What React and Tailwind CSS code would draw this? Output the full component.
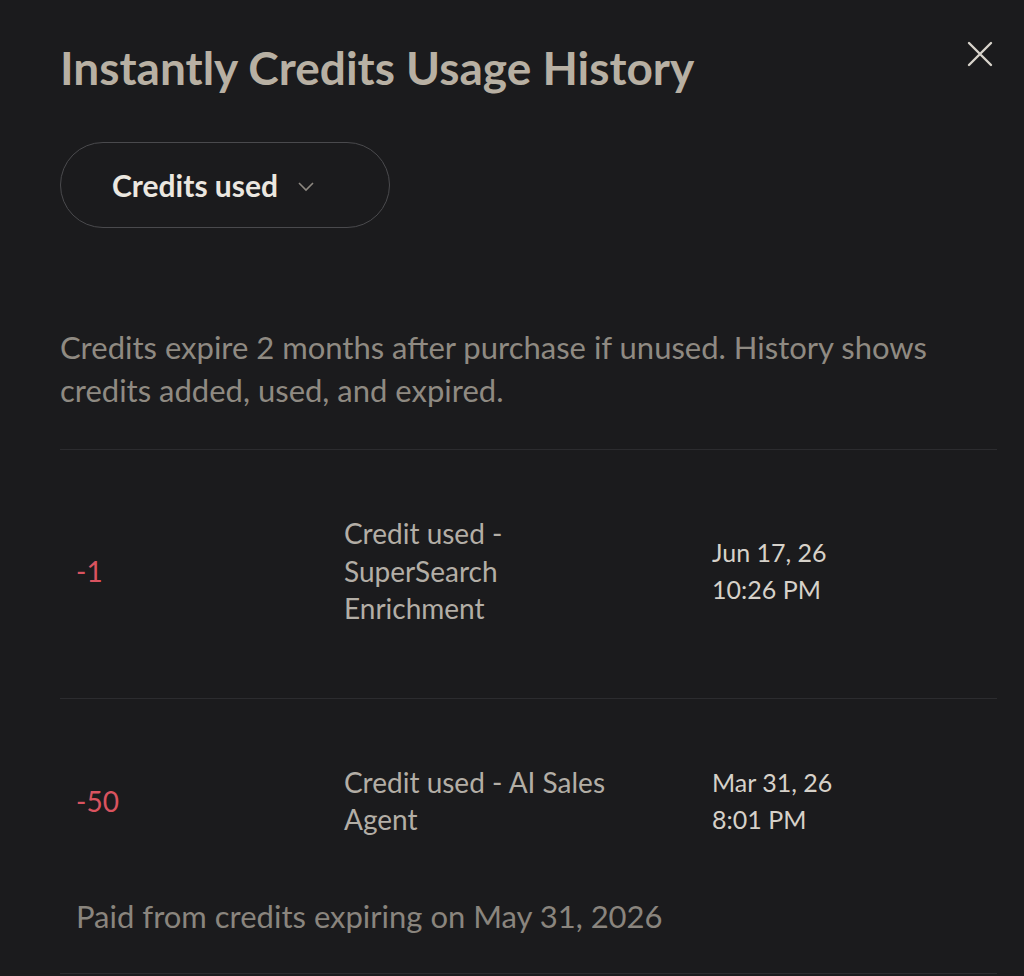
import React from 'react';

const rows = [
    { amount: '-1', desc: 'Credit used - SuperSearch Enrichment', date: 'Jun 17, 26', time: '10:26 PM' },
    { amount: '-50', desc: 'Credit used - AI Sales Agent', date: 'Mar 31, 26', time: '8:01 PM' },
];

const Row = ({ row, first }) => (
    <div className={`flex items-center border-t border-[#2c2c2f] pt-[65px] ${first ? 'pb-[70px]' : 'pb-[56px]'}`}>
        <div className="w-[284px] pl-4 text-[28px] text-[#d9535f]">{row.amount}</div>
        <div className="w-[368px] pr-[90px] text-[28px] leading-[37.5px] text-[#b3aea6]">{row.desc}</div>
        <div className="text-[25px] leading-[37.5px] text-[#d6d1c9]">
            <div>{row.date}</div>
            <div>{row.time}</div>
        </div>
    </div>
);

const App = () => {
    return (
        <div className="min-h-[976px] w-full bg-[#1b1b1d] font-['Lato','Open_Sans',sans-serif]">
            <div className="relative px-[60px] pt-[40px]">
                {/* close */}
                <button className="absolute right-[31px] top-[41px] text-[#d8d3cb]">
                    <svg width="26" height="26" viewBox="0 0 26 26" fill="none" stroke="currentColor" strokeWidth="2.4" strokeLinecap="round">
                        <path d="M2 2 L24 24 M24 2 L2 24" />
                    </svg>
                </button>

                <h1 className="text-[46px] font-bold leading-[56px] text-[#b8b0a3]">
                    Instantly Credits Usage History
                </h1>

                <button className="mt-[46px] flex h-[86px] w-[330px] items-center rounded-full border border-[#4a4a4d] pl-[51px]">
                    <span className="text-[30px] font-bold text-[#ebe7e0]">Credits used</span>
                    <svg className="ml-[19px] mt-[2px]" width="18" height="12" viewBox="0 0 18 12" fill="none" stroke="#8d8880" strokeWidth="1.6">
                        <path d="M2 3 L9 10 L16 3" />
                    </svg>
                </button>

                <p className="mt-[98px] max-w-[900px] text-[31px] leading-[43px] text-[#8f8a82]">
                    Credits expire 2 months after purchase if unused. History shows credits added, used, and expired.
                </p>

                <div className="mt-[37px] mr-[-33px]">
                    {rows.map((r, i) => (
                        <Row key={i} row={r} first={i === 0} />
                    ))}
                    <div className="border-b border-[#2c2c2f] pb-[35px] pl-4 text-[31px] leading-[43px] text-[#8a857e]">
                        Paid from credits expiring on May 31, 2026
                    </div>
                </div>
            </div>
        </div>
    );
};

export default App;
